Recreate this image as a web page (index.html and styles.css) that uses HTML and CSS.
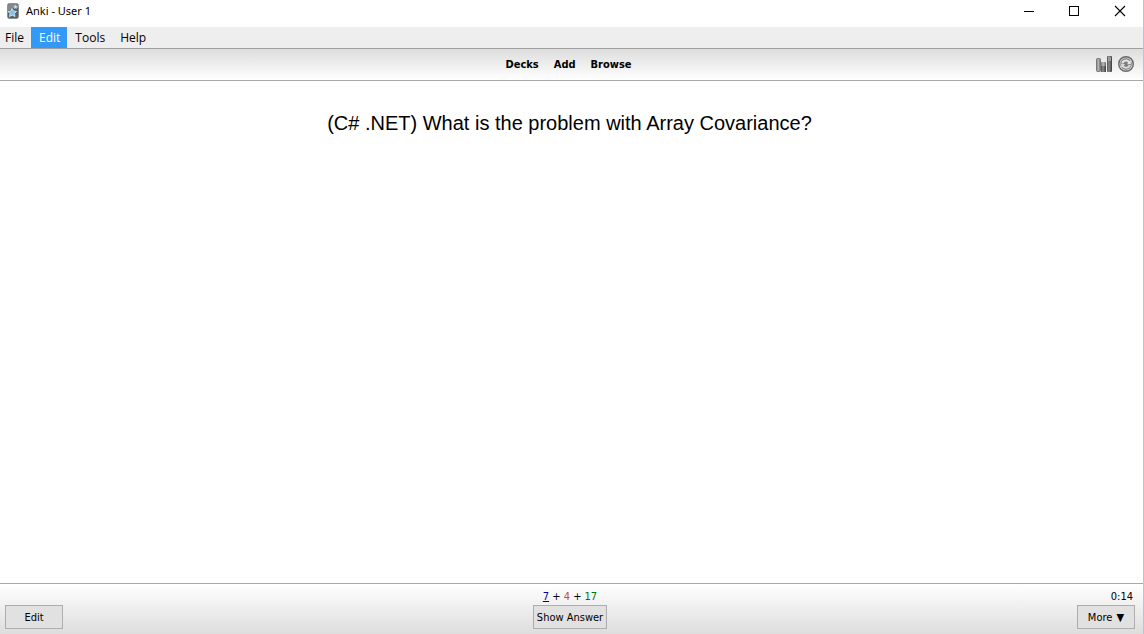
FILE: index.html
```html
<!DOCTYPE html>
<html lang="en">
<head>
    <meta charset="UTF-8">
    <meta name="viewport" content="width=device-width, initial-scale=1.0">
    <title>Anki - User 1</title>
    <link rel="stylesheet" href="styles.css">
</head>
<body>
    <header class="titlebar">
        <svg class="app-icon" width="12" height="16" viewBox="0 0 12 16" aria-hidden="true">
            <rect x="0.5" y="0.5" width="11" height="15" rx="2" fill="#5c6063" stroke="#8b8f91"/>
            <path d="M1 3 Q1 1 3 1 H9 Q11 1 11 3 V5 Q6 4 1 8 Z" fill="#85898b"/>
            <path d="M5 5.5 L6.5 8 L9.5 8.5 L7.5 10.5 L8 13.5 L5.2 12.2 L2.5 13.5 L3 10.5 L1 8.5 L3.8 8 Z" fill="#83c1e6" stroke="#d8edf8" stroke-width="0.8"/>
            <path d="M8.5 1.5 L9.2 3 L10.8 3.4 L9.6 4.5 L9.7 6 L8.4 5.2 L7 5.8 L7.3 4.3 L6.3 3.2 L7.8 3 Z" fill="#c3dfee"/>
        </svg>
        <span class="window-title">Anki - User 1</span>
        <div class="window-buttons">
            <button type="button" aria-label="Minimize">
                <svg width="12" height="12" viewBox="0 0 12 12"><path d="M2 6.5H12" stroke="#000"/></svg>
            </button>
            <button type="button" aria-label="Maximize">
                <svg width="12" height="12" viewBox="0 0 12 12"><rect x="1.5" y="1.5" width="9" height="9" fill="none" stroke="#000"/></svg>
            </button>
            <button type="button" aria-label="Close">
                <svg width="12" height="12" viewBox="0 0 12 12"><path d="M1 1L11 11M11 1L1 11" stroke="#000" stroke-width="1.1"/></svg>
            </button>
        </div>
    </header>

    <nav class="menubar">
        <button type="button">File</button>
        <button type="button" class="active">Edit</button>
        <button type="button">Tools</button>
        <button type="button">Help</button>
    </nav>

    <div class="toolbar">
        <nav class="toolbar-links">
            <a href="#decks">Decks</a>
            <a href="#add">Add</a>
            <a href="#browse">Browse</a>
        </nav>
        <div class="toolbar-icons">
            <a href="#stats" aria-label="Statistics">
                <svg width="16" height="16" viewBox="0 0 16 16">
                    <defs>
                        <linearGradient id="bar" x1="0" x2="1" y1="0" y2="0">
                            <stop offset="0" stop-color="#777"/>
                            <stop offset="0.45" stop-color="#bbb"/>
                            <stop offset="1" stop-color="#666"/>
                        </linearGradient>
                        <linearGradient id="darkbar" x1="0" x2="1" y1="0" y2="0">
                            <stop offset="0" stop-color="#555"/>
                            <stop offset="0.4" stop-color="#8c8c8c"/>
                            <stop offset="1" stop-color="#3c3c3c"/>
                        </linearGradient>
                    </defs>
                    <rect x="0.5" y="2.5" width="4" height="13" rx="1" fill="url(#bar)" stroke="#777"/>
                    <rect x="5" y="6" width="5" height="10" rx="1" fill="url(#bar)"/>
                    <rect x="5" y="10" width="5" height="6" fill="url(#darkbar)"/>
                    <rect x="11" y="0" width="5" height="16" rx="1" fill="url(#darkbar)"/>
                    <rect x="12" y="1" width="3" height="4" fill="#999"/>
                </svg>
            </a>
            <a href="#sync" aria-label="Sync">
                <svg width="16" height="16" viewBox="0 0 16 16">
                    <circle cx="8" cy="8" r="7.3" fill="#d0d0d0" stroke="#686868" stroke-width="1.4"/>
                    <circle cx="8" cy="8" r="5.7" fill="#7c7c7c"/>
                    <path d="M3.2 7.5C3.6 4.9 5.6 3.4 8 3.4C9.6 3.4 10.8 4.1 11.5 5.1L12.8 4.3V8.2H8.9L10.1 6.7C9.6 5.9 8.9 5.4 8 5.4C6.7 5.4 5.8 6.3 5.5 7.5Z" fill="#e4e4e4"/>
                    <path d="M12.8 8.9C12.4 11.3 10.4 12.7 8 12.7C6.4 12.7 5.2 12 4.5 11L3.2 11.8V7.9H7.1L5.9 9.4C6.4 10.2 7.1 10.7 8 10.7C9.3 10.7 10.2 9.9 10.5 8.9Z" fill="#dadada"/>
                </svg>
            </a>
        </div>
    </div>

    <main class="card">(C# .NET) What is the problem with Array Covariance?</main>

    <footer class="bottombar">
        <div class="side">
            <button type="button" class="wide">Edit</button>
        </div>
        <div class="answer">
            <div class="counts"><span class="new">7</span> + <span class="learn">4</span> + <span class="review">17</span></div>
            <button type="button">Show Answer</button>
        </div>
        <div class="side right">
            <div class="timer">0:14</div>
            <button type="button" class="wide">More <span class="arrow">▼</span></button>
        </div>
    </footer>
</body>
</html>
```

FILE: styles.css
```css
* {
    box-sizing: border-box;
}
body {
    display: flex;
    flex-direction: column;
    min-height: 100vh;
    margin: 0;
    border-right: 1px solid #b4c8cc;
    background-color: #ffffff;
    color: #000000;
    font-family: Tahoma, "DejaVu Sans Condensed", "DejaVu Sans", sans-serif;
    font-size: 11px;
    line-height: 14px;
}
button {
    font: inherit;
    color: inherit;
}
a {
    color: inherit;
    text-decoration: none;
}
svg {
    display: block;
}
.titlebar {
    display: flex;
    align-items: center;
    height: 27px;
    padding: 0 0 5px 7px;
}
.window-title {
    margin-left: 7px;
    font-family: "Segoe UI", "Noto Sans", sans-serif;
}
.window-buttons {
    display: flex;
    margin-left: auto;
}
.window-buttons button {
    display: flex;
    align-items: center;
    justify-content: center;
    width: 46px;
    height: 22px;
    padding: 0;
    border: none;
    background: none;
}
.menubar {
    display: flex;
    height: 22px;
    border-bottom: 1px solid #a0a0a0;
    background-color: #eeeeee;
    font-family: "Segoe UI", "Open Sans", sans-serif;
    font-size: 12px;
}
.menubar button {
    padding: 0 7px 0 8px;
    border: none;
    background: none;
}
.menubar button:first-child {
    padding-left: 5px;
}
.menubar .active {
    background-color: #3399f8;
    color: #ffffff;
}
.toolbar {
    display: grid;
    grid-template-columns: 1fr auto 1fr;
    align-items: center;
    height: 32px;
    padding: 0 9px 0 3px;
    border-bottom: 1px solid #a8a8a8;
    background: linear-gradient(#dddddd, #ffffff);
}
.toolbar-links {
    display: flex;
    grid-column: 2;
    gap: 15px;
    font-weight: bold;
    line-height: 16px;
}
.toolbar-icons {
    display: flex;
    justify-content: flex-end;
    gap: 6px;
    padding-bottom: 1px;
}
.card {
    flex: 1;
    padding: 30px 24px 20px 20px;
    font-family: Arial, "Liberation Sans", sans-serif;
    font-size: 20px;
    line-height: 24px;
    text-align: center;
}
.bottombar {
    display: grid;
    grid-template-columns: 1fr auto 1fr;
    align-items: end;
    padding: 6px 8px 5px 5px;
    border-top: 1px solid #a8a8a8;
    background: linear-gradient(#ffffff, #dddddd);
}
.bottombar button {
    height: 24px;
    padding: 1px 3px 0;
    border: 1px solid #adadad;
    background-color: #e1e1e1;
}
.bottombar .wide {
    width: 58px;
}
.answer {
    text-align: center;
}
.right {
    text-align: right;
}
.counts,
.timer {
    margin-bottom: 1px;
}
.timer {
    padding-right: 2px;
}
.new {
    color: #000099;
    text-decoration: underline;
}
.learn {
    color: #c35617;
}
.review {
    color: #007700;
}
.arrow {
    margin-left: 1px;
}
```
